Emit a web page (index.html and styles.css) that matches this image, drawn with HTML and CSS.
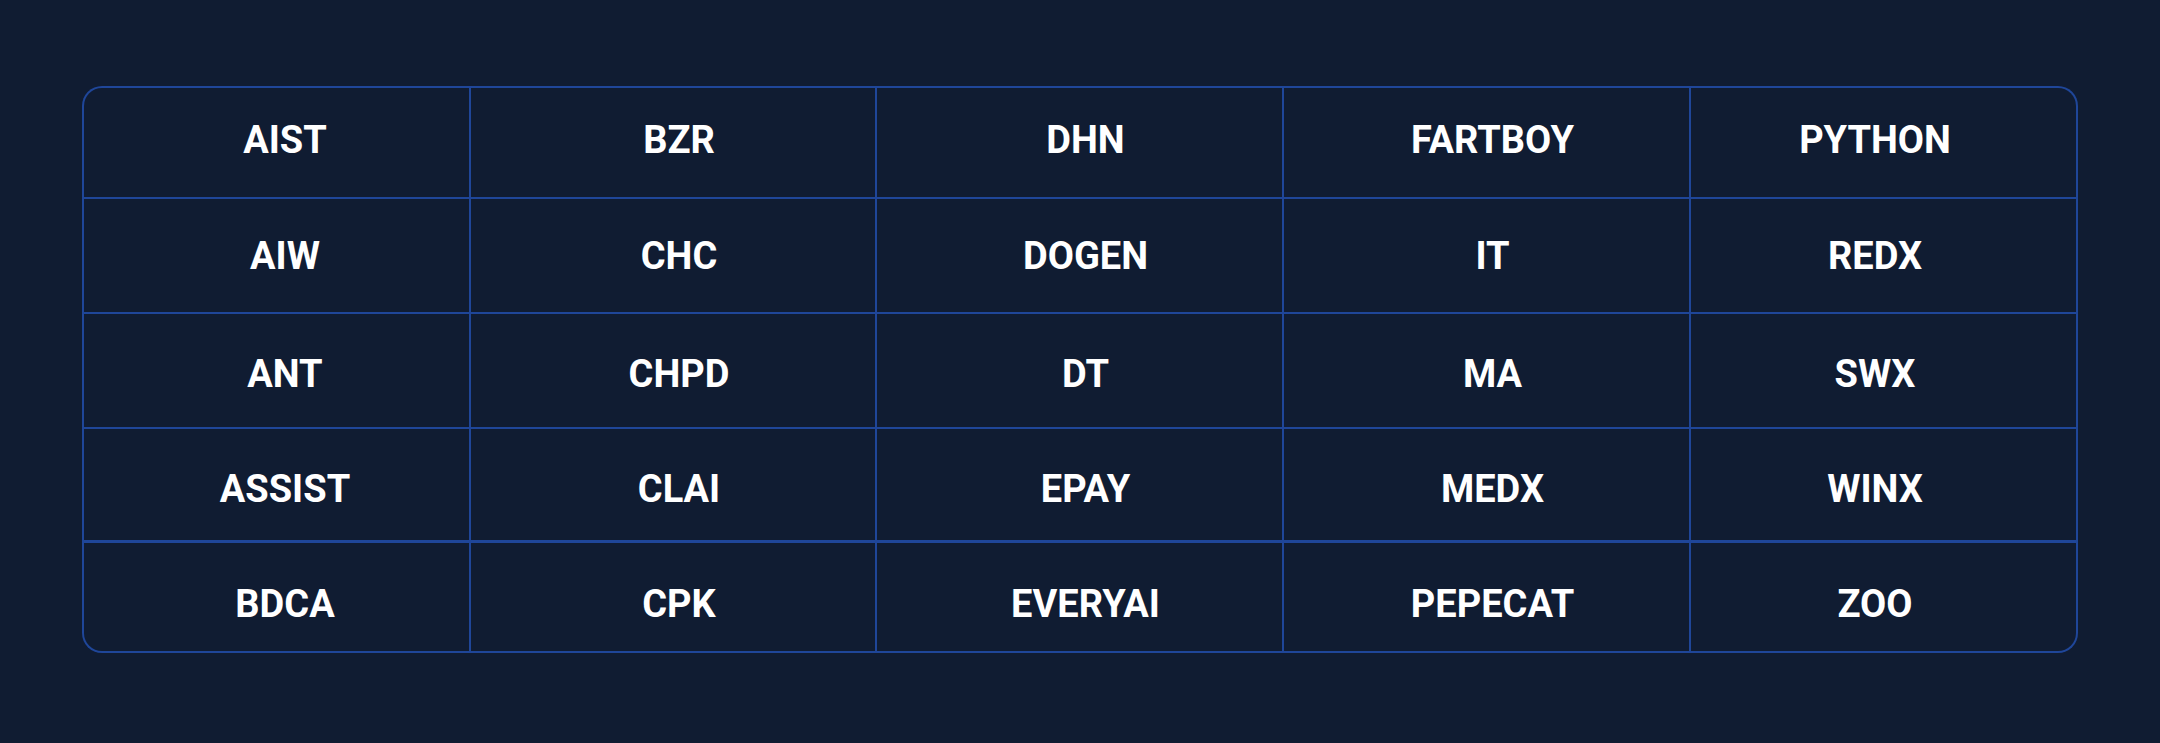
FILE: index.html
```html
<!DOCTYPE html>
<html lang="en">
<head>
<meta charset="utf-8">
<title>Tokens</title>
<link rel="stylesheet" href="styles.css">
</head>
<body>
<main class="page">
  <div class="grid">
    <div class="cell c1 r1 tl">AIST</div>
    <div class="cell r1">BZR</div>
    <div class="cell r1">DHN</div>
    <div class="cell r1">FARTBOY</div>
    <div class="cell c5 r1 tr">PYTHON</div>

    <div class="cell c1">AIW</div>
    <div class="cell">CHC</div>
    <div class="cell">DOGEN</div>
    <div class="cell">IT</div>
    <div class="cell c5">REDX</div>

    <div class="cell c1 r3">ANT</div>
    <div class="cell r3">CHPD</div>
    <div class="cell r3">DT</div>
    <div class="cell r3">MA</div>
    <div class="cell c5 r3">SWX</div>

    <div class="cell c1 r4">ASSIST</div>
    <div class="cell r4">CLAI</div>
    <div class="cell r4">EPAY</div>
    <div class="cell r4">MEDX</div>
    <div class="cell c5 r4">WINX</div>

    <div class="cell c1 r5 bl">BDCA</div>
    <div class="cell r5">CPK</div>
    <div class="cell r5">EVERYAI</div>
    <div class="cell r5">PEPECAT</div>
    <div class="cell c5 r5 br">ZOO</div>
  </div>
</main>
</body>
</html>
```

FILE: styles.css
```css
html, body {
  margin: 0;
  padding: 0;
  background: #101c32;
}

.page {
  box-sizing: border-box;
  width: 2160px;
  height: 743px;
  padding: 86px 82px 0 82px;
}

.grid {
  display: grid;
  grid-template-columns: 385px 404px 405px 405px 385px;
  grid-template-rows: 109px 113px 113px 111px 109px;
  gap: 2px;
  padding: 2px;
  width: max-content;
  background: #1f4699;
  border-radius: 20px;
}

.cell {
  box-sizing: border-box;
  display: flex;
  align-items: center;
  justify-content: center;
  padding-left: 12px;
  background: #101c32;
  color: #ffffff;
  font-family: "Roboto", "Liberation Sans", sans-serif;
  font-weight: 700;
  font-size: 38px;
  line-height: 44px;
}

.c1 {
  padding-left: 17px;
}

.c5 {
  padding-left: 0;
  padding-right: 17px;
}

.r1 {
  padding-bottom: 5px;
}

.r3 {
  padding-top: 6px;
}

.r4 {
  padding-top: 8px;
}

.r5 {
  border-top: 1px solid #1f4699;
  padding-top: 14px;
}

.tl { border-top-left-radius: 18px; }
.tr { border-top-right-radius: 18px; }
.bl { border-bottom-left-radius: 18px; }
.br { border-bottom-right-radius: 18px; }
```
